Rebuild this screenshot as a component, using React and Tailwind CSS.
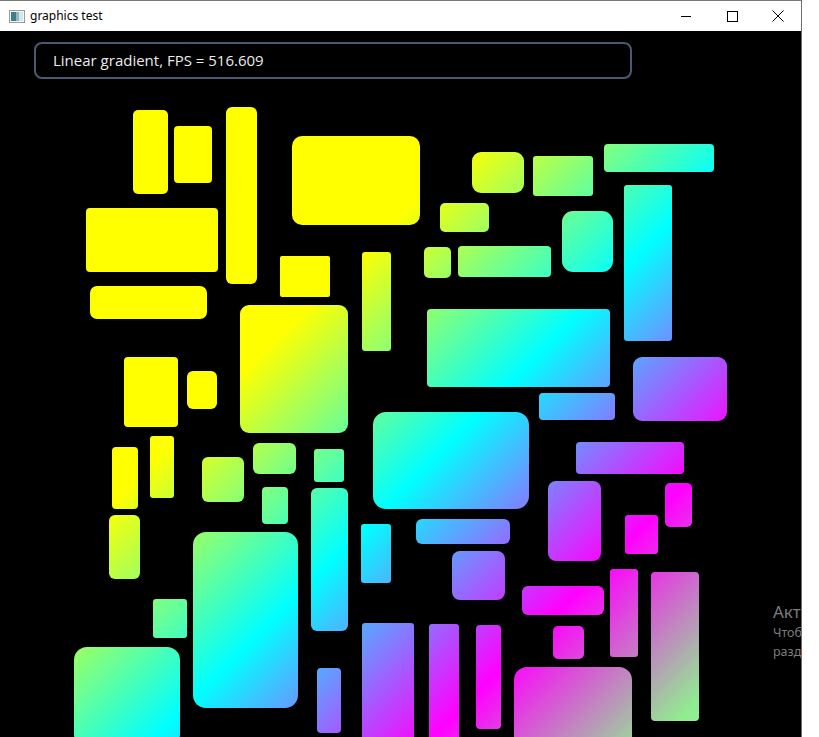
import React from "react";

// rectangles on the canvas: [left, top, width, height, radius] in page pixels
const rects = [
  [133, 110, 35, 84, 5],
  [174, 126, 38, 57, 4],
  [226, 107, 31, 177, 6],
  [292, 136, 128, 89, 10],
  [86, 208, 132, 64, 4],
  [90, 286, 117, 33, 7],
  [280, 256, 50, 41, 2],
  [362, 252, 29, 99, 3],
  [240, 305, 108, 128, 9],
  [124, 357, 54, 70, 4],
  [187, 371, 30, 38, 6],
  [472, 152, 52, 41, 9],
  [533, 156, 60, 40, 3],
  [604, 144, 110, 28, 4],
  [440, 203, 49, 29, 5],
  [424, 247, 27, 31, 5],
  [458, 246, 93, 31, 4],
  [562, 211, 51, 61, 11],
  [624, 185, 48, 156, 3],
  [427, 309, 183, 78, 4],
  [539, 393, 76, 27, 4],
  [633, 357, 94, 64, 9],
  [373, 412, 156, 97, 13],
  [112, 447, 26, 62, 4],
  [150, 436, 24, 62, 3],
  [202, 457, 42, 45, 6],
  [253, 443, 43, 31, 6],
  [314, 449, 30, 33, 3],
  [262, 487, 26, 37, 4],
  [109, 515, 31, 64, 6],
  [311, 488, 37, 143, 6],
  [193, 532, 105, 176, 13],
  [361, 524, 30, 59, 3],
  [153, 599, 34, 39, 3],
  [74, 647, 106, 100, 13],
  [317, 668, 24, 65, 4],
  [362, 623, 52, 130, 3],
  [576, 442, 108, 32, 4],
  [548, 481, 53, 80, 8],
  [665, 483, 27, 44, 5],
  [625, 515, 33, 39, 3],
  [416, 519, 94, 25, 6],
  [452, 551, 53, 49, 8],
  [522, 586, 82, 29, 6],
  [610, 569, 28, 88, 3],
  [651, 572, 48, 149, 4],
  [553, 626, 31, 33, 5],
  [514, 667, 118, 100, 13],
  [429, 624, 30, 130, 3],
  [476, 625, 25, 104, 4],
];

const TOP = 31; // title bar height

function AppIcon() {
  return (
    <svg width="16" height="13" viewBox="0 0 16 13">
      <rect x="0.5" y="0.5" width="15" height="12" fill="#f4f4f4" stroke="#9a9a9a" />
      <rect x="2" y="2" width="5" height="9" fill="#3d7f86" />
      <rect x="7" y="2" width="3" height="9" fill="#8fb9c0" />
      <rect x="10" y="2" width="4" height="9" fill="#d9e6e8" />
    </svg>
  );
}

function TitleBar() {
  return (
    <div className="h-[31px] flex items-center bg-white border-t border-[#7a7a7a] font-['Noto_Sans',sans-serif]">
      <div className="ml-[9px] mr-[5px] flex items-center">
        <AppIcon />
      </div>
      <span className="text-[12px] text-black leading-none -mt-[1px]">graphics test</span>
      <div className="ml-auto flex h-full">
        <div className="w-[46px] flex items-center justify-center">
          <div className="w-[10px] h-px bg-black" />
        </div>
        <div className="w-[46px] flex items-center justify-center">
          <div className="w-[11px] h-[11px] border border-black" />
        </div>
        <div className="w-[46px] flex items-center justify-center">
          <svg width="12" height="12" viewBox="0 0 12 12">
            <path d="M0.5 0.5 L11.5 11.5 M11.5 0.5 L0.5 11.5" stroke="#000" strokeWidth="1" />
          </svg>
        </div>
      </div>
    </div>
  );
}

export default function App() {
  return (
    <div className="w-[819px] h-[737px] bg-white overflow-hidden">
      <div className="w-[802px] h-full flex flex-col border-r border-[#6f6f6f]">
        <TitleBar />
        <div className="relative flex-1 bg-black overflow-hidden">
          {/* status box */}
          <div className="absolute left-[34px] top-[11px] w-[598px] h-[37px] rounded-lg border-2 border-[#4b5874] flex items-center pl-[17px]">
            <span className="text-[15px] text-[#ececec] font-['Open_Sans',sans-serif]">
              Linear gradient, FPS = 516.609
            </span>
          </div>

          {rects.map(([x, y, w, h, r], i) => (
            <div
              key={i}
              className="absolute bg-fixed bg-[linear-gradient(135deg,#ffff00_39.5%,#00ffff_57.4%,#ff00ff_75.2%,#90ee90_90%)]"
              style={{ left: x, top: y - TOP, width: w, height: h, borderRadius: r }}
            />
          ))}

          {/* windows activation watermark */}
          <div className="absolute left-[773px] top-[570px] text-[#7c7c7c] font-['Noto_Sans',sans-serif] whitespace-nowrap">
            <div className="text-[17px] leading-[22px]">Активация Windows</div>
            <div className="text-[12.5px] leading-[20px]">Чтобы активировать Windows, перейдите в</div>
            <div className="text-[12.5px] leading-[18px]">раздел "Параметры".</div>
          </div>
        </div>
      </div>
    </div>
  );
}
